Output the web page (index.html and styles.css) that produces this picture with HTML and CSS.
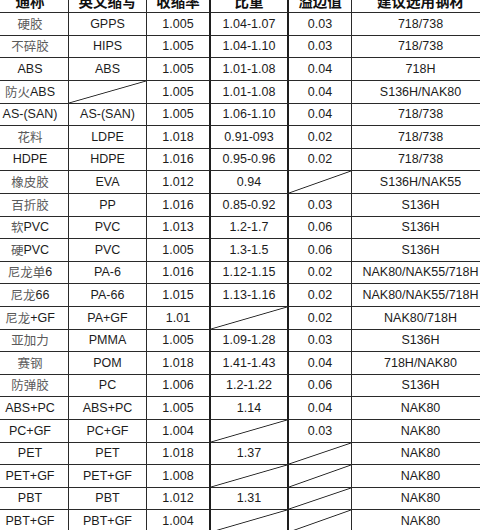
FILE: index.html
```html
<!DOCTYPE html>
<html lang="zh">
<head>
<meta charset="utf-8">
<title>塑料收缩率与钢材</title>
<link rel="stylesheet" href="styles.css">
</head>
<body>
<div class="sheet">
  <div class="c h c1">通称</div><div class="c h c2">英文缩写</div><div class="c h c3">收缩率</div><div class="c h c4">比重</div><div class="c h c5">溢边值</div><div class="c h c6">建议选用钢材</div>

  <div class="c c1"><span class="zh">硬胶</span></div><div class="c c2">GPPS</div><div class="c c3">1.005</div><div class="c c4">1.04-1.07</div><div class="c c5">0.03</div><div class="c c6">718/738</div>
  <div class="c c1"><span class="zh">不碎胶</span></div><div class="c c2">HIPS</div><div class="c c3">1.005</div><div class="c c4">1.04-1.10</div><div class="c c5">0.03</div><div class="c c6">718/738</div>
  <div class="c c1">ABS</div><div class="c c2">ABS</div><div class="c c3">1.005</div><div class="c c4">1.01-1.08</div><div class="c c5">0.04</div><div class="c c6">718H</div>
  <div class="c c1"><span class="zh">防火</span>ABS</div><div class="c c2 na"></div><div class="c c3">1.005</div><div class="c c4">1.01-1.08</div><div class="c c5">0.04</div><div class="c c6">S136H/NAK80</div>
  <div class="c c1">AS-(SAN)</div><div class="c c2">AS-(SAN)</div><div class="c c3">1.005</div><div class="c c4">1.06-1.10</div><div class="c c5">0.04</div><div class="c c6">718/738</div>
  <div class="c c1"><span class="zh">花料</span></div><div class="c c2">LDPE</div><div class="c c3">1.018</div><div class="c c4">0.91-093</div><div class="c c5">0.02</div><div class="c c6">718/738</div>
  <div class="c c1">HDPE</div><div class="c c2">HDPE</div><div class="c c3">1.016</div><div class="c c4">0.95-0.96</div><div class="c c5">0.02</div><div class="c c6">718/738</div>
  <div class="c c1"><span class="zh">橡皮胶</span></div><div class="c c2">EVA</div><div class="c c3">1.012</div><div class="c c4">0.94</div><div class="c c5 na"></div><div class="c c6">S136H/NAK55</div>
  <div class="c c1"><span class="zh">百折胶</span></div><div class="c c2">PP</div><div class="c c3">1.016</div><div class="c c4">0.85-0.92</div><div class="c c5">0.03</div><div class="c c6">S136H</div>
  <div class="c c1"><span class="zh">软</span>PVC</div><div class="c c2">PVC</div><div class="c c3">1.013</div><div class="c c4">1.2-1.7</div><div class="c c5">0.06</div><div class="c c6">S136H</div>
  <div class="c c1"><span class="zh">硬</span>PVC</div><div class="c c2">PVC</div><div class="c c3">1.005</div><div class="c c4">1.3-1.5</div><div class="c c5">0.06</div><div class="c c6">S136H</div>
  <div class="c c1"><span class="zh">尼龙单</span>6</div><div class="c c2">PA-6</div><div class="c c3">1.016</div><div class="c c4">1.12-1.15</div><div class="c c5">0.02</div><div class="c c6">NAK80/NAK55/718H</div>
  <div class="c c1"><span class="zh">尼龙</span>66</div><div class="c c2">PA-66</div><div class="c c3">1.015</div><div class="c c4">1.13-1.16</div><div class="c c5">0.02</div><div class="c c6">NAK80/NAK55/718H</div>
  <div class="c c1"><span class="zh">尼龙</span>+GF</div><div class="c c2">PA+GF</div><div class="c c3">1.01</div><div class="c c4 na"></div><div class="c c5">0.02</div><div class="c c6">NAK80/718H</div>
  <div class="c c1"><span class="zh">亚加力</span></div><div class="c c2">PMMA</div><div class="c c3">1.005</div><div class="c c4">1.09-1.28</div><div class="c c5">0.03</div><div class="c c6">S136H</div>
  <div class="c c1"><span class="zh">赛钢</span></div><div class="c c2">POM</div><div class="c c3">1.018</div><div class="c c4">1.41-1.43</div><div class="c c5">0.04</div><div class="c c6">718H/NAK80</div>
  <div class="c c1"><span class="zh">防弹胶</span></div><div class="c c2">PC</div><div class="c c3">1.006</div><div class="c c4">1.2-1.22</div><div class="c c5">0.06</div><div class="c c6">S136H</div>
  <div class="c c1">ABS+PC</div><div class="c c2">ABS+PC</div><div class="c c3">1.005</div><div class="c c4">1.14</div><div class="c c5">0.04</div><div class="c c6">NAK80</div>
  <div class="c c1">PC+GF</div><div class="c c2">PC+GF</div><div class="c c3">1.004</div><div class="c c4 na"></div><div class="c c5">0.03</div><div class="c c6">NAK80</div>
  <div class="c c1">PET</div><div class="c c2">PET</div><div class="c c3">1.018</div><div class="c c4">1.37</div><div class="c c5 na"></div><div class="c c6">NAK80</div>
  <div class="c c1">PET+GF</div><div class="c c2">PET+GF</div><div class="c c3">1.008</div><div class="c c4 na"></div><div class="c c5 na"></div><div class="c c6">NAK80</div>
  <div class="c c1">PBT</div><div class="c c2">PBT</div><div class="c c3">1.012</div><div class="c c4">1.31</div><div class="c c5 na"></div><div class="c c6">NAK80</div>
  <div class="c c1">PBT+GF</div><div class="c c2">PBT+GF</div><div class="c c3">1.004</div><div class="c c4 na"></div><div class="c c5 na"></div><div class="c c6">NAK80</div>
</div>
</body>
</html>
```

FILE: styles.css
```css
html, body {
  margin: 0;
  padding: 0;
  background: #ffffff;
  overflow: hidden;
}

.sheet {
  display: grid;
  grid-template-columns: 77px 78px 64px 78px 63px 138px;
  grid-template-rows: 22.6px repeat(23, 22.6px);
  margin-top: -9.3px;
  margin-left: -8px;
  width: max-content;
  font-family: "Liberation Sans", Arial, "Noto Sans CJK SC", sans-serif;
  font-size: 12.5px;
  color: #1c1c1c;
}

.c {
  box-sizing: border-box;
  display: flex;
  align-items: center;
  justify-content: center;
  white-space: nowrap;
  border-right: 1px solid #2a2a2a;
  border-bottom: 1px solid #2a2a2a;
  line-height: 1;
}

.c3, .c4 {
  border-right-width: 2px;
  border-right-color: #1e1e1e;
}

.h {
  font-family: "Noto Sans CJK SC", sans-serif;
  font-weight: 700;
  font-size: 14.5px;
  color: #111;
}

.zh {
  font-family: "Noto Sans CJK SC", sans-serif;
  color: #5a5a5a;
  font-size: 12.5px;
}

.na {
  background: linear-gradient(to bottom right,
    transparent calc(50% - 0.9px),
    #222 50%,
    transparent calc(50% + 0.9px));
}
```
